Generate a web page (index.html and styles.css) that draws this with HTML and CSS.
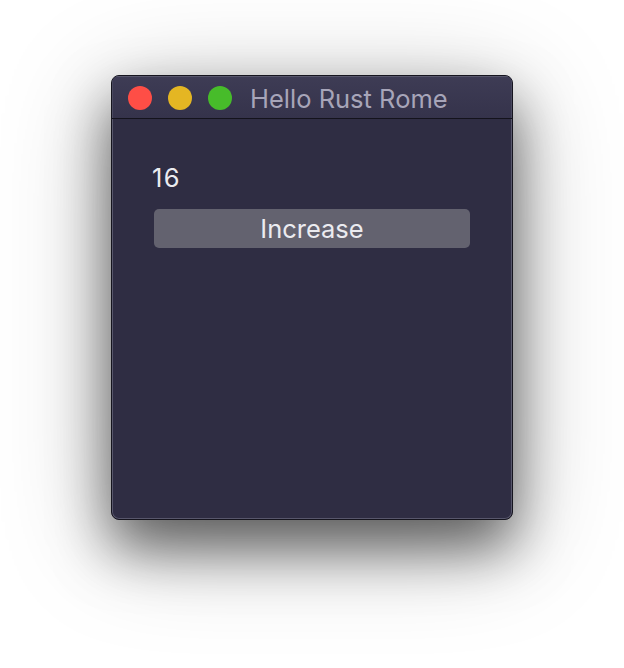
FILE: index.html
```html
<!DOCTYPE html>
<html>
<head>
<meta charset="utf-8">
<link rel="stylesheet" href="styles.css">
</head>
<body>
<div class="window">
  <div class="titlebar">
    <div class="lights">
      <span class="light red"></span>
      <span class="light yellow"></span>
      <span class="light green"></span>
    </div>
    <div class="title">Hello Rust Rome</div>
  </div>
  <div class="content">
    <div class="count">16</div>
    <button class="btn">Increase</button>
  </div>
</div>
</body>
</html>
```

FILE: styles.css
```css
html, body {
  margin: 0;
  padding: 0;
  background: #ffffff;
}
html {
  height: 668px;
  overflow: hidden;
}
body {
  box-sizing: border-box;
  height: 668px;
  padding: 75px 0 0 111px;
  font-family: Inter, "Noto Sans", sans-serif;
}
.window {
  width: 400px;
  height: 443px;
  border: 1px solid #16151f;
  border-radius: 8px;
  background: #2f2d43;
  box-shadow: inset 0 0 0 1px #58576c, 0 28px 55px rgba(0,0,0,0.55), 0 20px 110px rgba(0,0,0,0.28);
  overflow: hidden;
  display: flex;
  flex-direction: column;
}
.titlebar {
  height: 42px;
  border-bottom: 1px solid #14131c;
  background: linear-gradient(#3e3c55, #35334b);
  display: flex;
  align-items: center;
  padding-left: 16px;
  box-shadow: inset 0 1px 0 #58576c, inset 1px 0 0 #4a4960, inset -1px 0 0 #4a4960;
}
.lights {
  display: flex;
  gap: 16px;
  margin-top: 2px;
}
.light {
  width: 24px;
  height: 24px;
  border-radius: 50%;
  display: block;
}
.red { background: #fe4e46; }
.yellow { background: #e4b623; }
.green { background: #47bc2a; }
.title {
  margin-left: 18px;
  margin-top: 3px;
  color: #a7a5b9;
  font-size: 25.5px;
  line-height: 1;
}
.content {
  padding: 47px 41px 0 42px;
  display: flex;
  flex-direction: column;
}
.count {
  color: #ebebf0;
  font-size: 25.5px;
  letter-spacing: 1.5px;
  line-height: 24px;
  margin-left: -2px;
}
.btn {
  margin-top: 19px;
  height: 39px;
  width: 316px;
  border: none;
  border-radius: 5px;
  background: #63626f;
  color: #ebebf0;
  font-family: Inter, "Noto Sans", sans-serif;
  font-size: 25.5px;
  line-height: 39px;
  padding: 0;
}
```
